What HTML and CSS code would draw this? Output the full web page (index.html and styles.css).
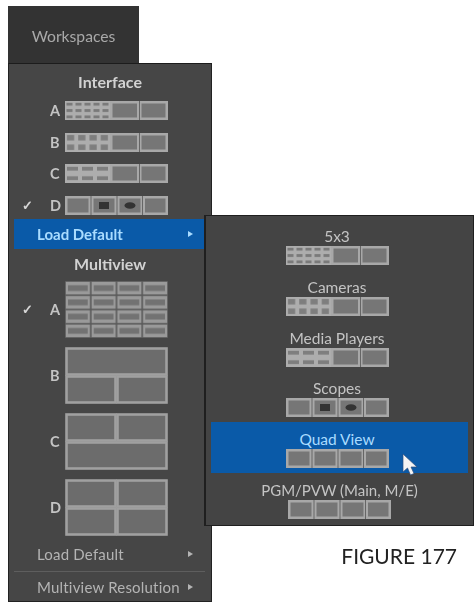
FILE: index.html
```html
<!DOCTYPE html>
<html lang="en">
<head>
<meta charset="utf-8">
<title>Workspaces</title>
<link rel="stylesheet" href="styles.css">
</head>
<body>
<svg class="sprite" aria-hidden="true">
  <defs>
    <pattern id="p5x3" width="9" height="6.33" patternUnits="userSpaceOnUse">
      <rect width="9" height="6.33" fill="#adadad"/><rect x="1.5" y="1.8" width="6" height="2.8" fill="#7a7a7a"/>
    </pattern>
    <pattern id="p4x2" width="11.25" height="9.5" patternUnits="userSpaceOnUse">
      <rect width="11.25" height="9.5" fill="#adadad"/><rect x="2" y="2" width="7.2" height="5.5" fill="#7e7e7e"/>
    </pattern>
    <pattern id="p3x2" width="15" height="9.5" patternUnits="userSpaceOnUse">
      <rect width="15" height="9.5" fill="#adadad"/><rect x="2" y="2.8" width="11" height="3.8" fill="#7e7e7e"/>
    </pattern>
    <pattern id="pmv" width="25.75" height="14.25" patternUnits="userSpaceOnUse">
      <rect width="25.75" height="14.25" fill="#5a5a5a"/>
      <rect x=".8" y=".8" width="24.15" height="12.65" fill="#9a9a9a"/>
      <rect x="3" y="4.2" width="19.75" height="5.85" fill="#727272"/>
    </pattern>
    <symbol id="two" viewBox="0 0 103 19">
      <rect x="45" width="58" height="19" fill="#a8a8a8"/>
      <rect x="47.5" y="2.5" width="24.5" height="14" fill="#767676"/>
      <rect x="76.5" y="2.5" width="24" height="14" fill="#767676"/>
      <rect x="74" width="1" height="19" fill="#666"/>
    </symbol>
    <symbol id="s5x3" viewBox="0 0 103 19">
      <rect width="45" height="19" fill="url(#p5x3)"/><use href="#two"/>
    </symbol>
    <symbol id="s4x2" viewBox="0 0 103 19">
      <rect width="45" height="19" fill="url(#p4x2)"/><use href="#two"/>
    </symbol>
    <symbol id="s3x2" viewBox="0 0 103 19">
      <rect width="45" height="19" fill="url(#p3x2)"/><use href="#two"/>
    </symbol>
    <symbol id="quad" viewBox="0 0 103 19">
      <rect width="103" height="19" fill="#a8a8a8"/>
      <rect x="2.5" y="2.5" width="21" height="14" fill="#767676"/>
      <rect x="28.5" y="2.5" width="21" height="14" fill="#767676"/>
      <rect x="54.5" y="2.5" width="21" height="14" fill="#767676"/>
      <rect x="80" y="2.5" width="20.5" height="14" fill="#767676"/>
      <rect x="25.5" width="1" height="19" fill="#666"/>
      <rect x="51.5" width="1" height="19" fill="#666"/>
      <rect x="77" width="1" height="19" fill="#666"/>
    </symbol>
    <symbol id="scopes" viewBox="0 0 103 19">
      <use href="#quad"/>
      <rect x="34" y="6" width="10" height="7" fill="#333"/>
      <ellipse cx="65" cy="9.5" rx="5.5" ry="3.2" fill="#333"/>
    </symbol>
    <symbol id="mva" viewBox="0 0 103 57">
      <rect width="103" height="57" fill="url(#pmv)"/>
    </symbol>
    <symbol id="mvb" viewBox="0 0 103 57">
      <g class="frame"><rect x="1.5" y="1.5" width="100" height="26"/><rect x="1.5" y="29.5" width="49" height="26"/><rect x="52.5" y="29.5" width="49" height="26"/></g>
    </symbol>
    <symbol id="mvc" viewBox="0 0 103 57">
      <g class="frame"><rect x="1.5" y="1.5" width="49" height="26"/><rect x="52.5" y="1.5" width="49" height="26"/><rect x="1.5" y="29.5" width="100" height="26"/></g>
    </symbol>
    <symbol id="mvd" viewBox="0 0 103 57">
      <g class="frame"><rect x="1.5" y="1.5" width="49" height="26"/><rect x="52.5" y="1.5" width="49" height="26"/><rect x="1.5" y="29.5" width="49" height="26"/><rect x="52.5" y="29.5" width="49" height="26"/></g>
    </symbol>
  </defs>
</svg>

<div class="stage">
  <div class="left">
    <div class="tab">Workspaces</div>
    <div class="menu">
      <div class="title">Interface</div>
      <div class="rows">
        <div class="row"><span class="check"></span><span class="letter">A</span><svg class="strip"><use href="#s5x3"/></svg></div>
        <div class="row"><span class="check"></span><span class="letter">B</span><svg class="strip"><use href="#s4x2"/></svg></div>
        <div class="row"><span class="check"></span><span class="letter">C</span><svg class="strip"><use href="#s3x2"/></svg></div>
        <div class="row"><span class="check">✓</span><span class="letter">D</span><svg class="strip"><use href="#scopes"/></svg></div>
      </div>
      <div class="action active"><span>Load Default</span><i class="arrow"></i></div>
      <div class="title title-mv">Multiview</div>
      <div class="rows rows-mv">
        <div class="row"><span class="check">✓</span><span class="letter">A</span><svg class="block"><use href="#mva"/></svg></div>
        <div class="row"><span class="check"></span><span class="letter">B</span><svg class="block"><use href="#mvb"/></svg></div>
        <div class="row"><span class="check"></span><span class="letter">C</span><svg class="block"><use href="#mvc"/></svg></div>
        <div class="row"><span class="check"></span><span class="letter">D</span><svg class="block"><use href="#mvd"/></svg></div>
      </div>
      <div class="action action-gap"><span>Load Default</span><i class="arrow"></i></div>
      <div class="action action-sep"><span>Multiview Resolution</span><i class="arrow"></i></div>
    </div>
  </div>

  <div class="right">
    <div class="submenu">
      <div class="item"><div class="label">5x3</div><svg class="strip"><use href="#s5x3"/></svg></div>
      <div class="item"><div class="label">Cameras</div><svg class="strip"><use href="#s4x2"/></svg></div>
      <div class="item"><div class="label">Media Players</div><svg class="strip"><use href="#s3x2"/></svg></div>
      <div class="item"><div class="label">Scopes</div><svg class="strip"><use href="#scopes"/></svg></div>
      <div class="item item-active">
        <div class="label">Quad View</div><svg class="strip"><use href="#quad"/></svg>
        <svg class="cursor" viewBox="0 0 16 23"><path d="M1 1v18l4.5-4 3 7 3.5-1.5-3-6.5H15z" fill="#f4f4f4" stroke="#2d4f80" stroke-width=".7"/></svg>
      </div>
      <div class="item item-last"><div class="label">PGM/PVW (Main, M/E)</div><svg class="strip"><use href="#quad"/></svg></div>
    </div>
    <div class="caption">FIGURE 177</div>
  </div>
</div>
</body>
</html>
```

FILE: styles.css
```css
* { box-sizing: border-box; }

html, body { height: 100%; }

body {
  margin: 0;
  background: #fff;
  overflow: hidden;
  font-family: Lato, "Liberation Sans", sans-serif;
}

.sprite { display: block; width: 0; height: 0; }

.frame rect { fill: #6c6c6c; stroke: #a0a0a0; stroke-width: 2.6; }

.stage {
  display: flex;
  align-items: flex-start;
  padding: 6px 0 0 8px;
  filter: blur(0.5px);
}

.left { width: 204px; flex: none; }

.tab {
  width: 131px;
  height: 57px;
  padding-top: 21px;
  background: #333;
  color: #a9a9a9;
  font-size: 15.7px;
  line-height: 18px;
  text-align: center;
}

.menu {
  height: 539px;
  padding-top: 10px;
  background: #464646;
  border: 1px solid #222;
  border-top-color: #1c1c1c;
}

.title {
  color: #d2d2d2;
  font-size: 16px;
  font-weight: 700;
  line-height: 16px;
  text-align: center;
}

.title-mv { margin-top: 7px; }

.rows {
  display: flex;
  flex-direction: column;
  gap: 12.5px;
  margin-top: 11px;
}

.rows-mv { gap: 9.3px; margin-top: 9px; }

.row { display: flex; align-items: center; padding-left: 13px; }

.check { width: 28px; color: #d6d6d6; font-size: 13px; font-weight: 700; }

.letter { width: 15px; color: #c4c4c4; font-size: 14.5px; font-weight: 700; }

.strip { display: block; width: 103px; height: 19px; flex: none; }

.block { display: block; width: 103px; height: 57px; flex: none; }

.action {
  display: flex;
  align-items: center;
  justify-content: space-between;
  height: 30px;
  margin: 4px 6px 0 5px;
  padding: 0 12px 0 23px;
  color: #b4b4b4;
  font-size: 15px;
  letter-spacing: .2px;
}

.action.active { background: #0a5aa8; color: #a9dcff; font-weight: 700; letter-spacing: 0; }

.action-gap { margin-top: 3px; }

.action-sep { margin-top: 2px; border-top: 1px solid #5e5e5e; }

.arrow {
  width: 0;
  height: 0;
  border-left: 5px solid currentColor;
  border-top: 3.5px solid transparent;
  border-bottom: 3.5px solid transparent;
}

.right {
  position: relative;
  width: 270px;
  flex: none;
  margin: 209px 0 0 -8px;
}

.submenu {
  height: 311px;
  padding: 3px 5px 0;
  background: #444;
  border: 1px solid #1f1f1f;
  border-left-width: 2px;
}

.item {
  position: relative;
  display: flex;
  flex-direction: column;
  align-items: center;
  height: 50.8px;
  padding: 9px 5px 0 0;
  color: #c4c4c4;
}

.item-active { background: #0a5aa8; color: #a9dcff; }

.item-last { padding-right: 0; }

.label { height: 18px; font-size: 15.5px; line-height: 16px; white-space: nowrap; }

.item-last .label { font-size: 15px; }

.cursor { position: absolute; left: 191px; top: 31px; width: 16px; height: 23px; }

.caption {
  margin-top: 17px;
  padding-right: 17px;
  color: #222;
  font-size: 21px;
  line-height: 26px;
  text-align: right;
}
```
